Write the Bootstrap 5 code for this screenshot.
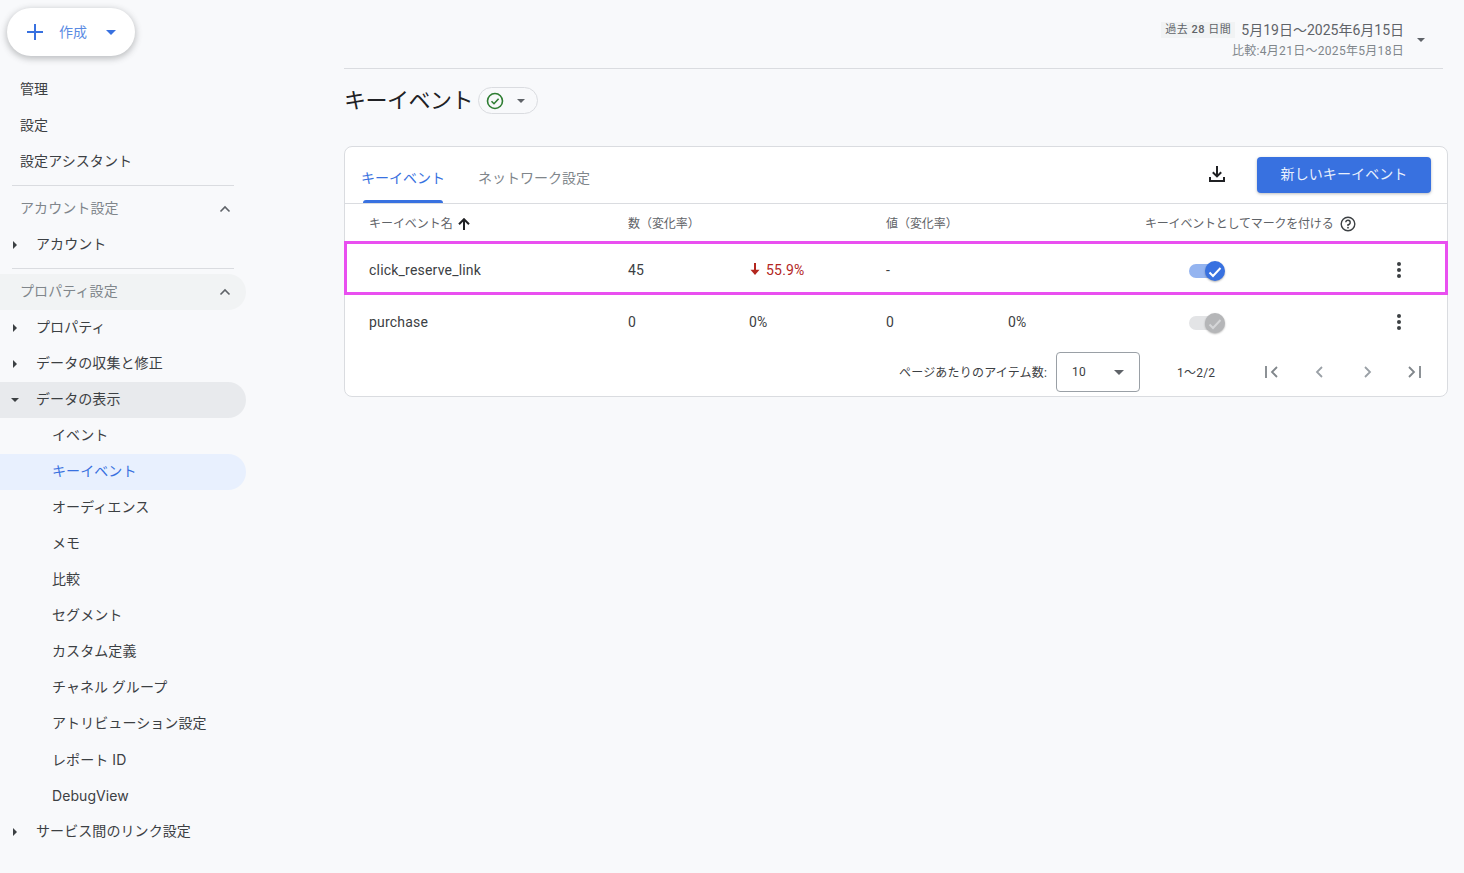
<!DOCTYPE html>
<html lang="ja">
<head>
<meta charset="utf-8">
<title>キーイベント</title>
<link href="https://cdn.jsdelivr.net/npm/bootstrap@5.3.0/dist/css/bootstrap.min.css" rel="stylesheet">
<style>
html,body{height:100%;}
body{background:#f8f9fb;font-family:Roboto,"Noto Sans CJK JP",sans-serif;color:#3c4043;font-size:14px;overflow:hidden;}
.shell{height:873px;}
.side{width:246px;flex:none;padding-top:8px;}
.create-btn{width:128px;height:48px;margin-left:7px;background:#fff;border-radius:24px;box-shadow:0 2px 6px 1px rgba(60,64,67,.3);color:#3871e0;font-size:14px;padding:0 0 0 20px;border:0;}
.create-btn span{margin:0 19px 0 16px;color:#5b8be3;}
.nav-stack{margin-top:16px;}
.side-row{height:36px;display:flex;align-items:center;color:#3c4043;font-size:14px;padding-left:20px;padding-bottom:2px;border-radius:0 18px 18px 0;letter-spacing:.08px;}
.side-row.sect{color:#80868b;justify-content:space-between;padding-right:15px;margin-top:5px;}
.side-row.sect svg{margin-top:2px;}
.side-row.tree{padding-left:36px;position:relative;}
.side-row.sub{padding-left:52px;}
.side-row.grey{background:#f1f3f4;}
.side-row.open{background:#e8eaed;}
.side-row.act{background:#e8f0fe;color:#3871e0;}
.inter-txt{font-family:Inter,"Noto Sans CJK JP",sans-serif;}
.caret-r{position:absolute;left:13px;top:14px;border-left:4px solid #3c4043;border-top:4px solid transparent;border-bottom:4px solid transparent;}
.caret-d{position:absolute;left:11px;top:16px;border-top:4px solid #3c4043;border-left:4px solid transparent;border-right:4px solid transparent;}
.rule{height:1px;background:#dadce0;margin:5px 12px 0 12px;}
.main-area{padding:0 16px 0 98px;}
.topbar{height:69px;margin-right:5px;border-bottom:1px solid #dadce0;padding:20px 0 0;}
.range-chip{background:#f1f3f4;color:#5f6368;font-size:11px;padding:0 4px;line-height:16px;letter-spacing:.5px;}
.range-main{font-size:14px;color:#5f6368;line-height:20px;margin-left:6px;}
.range-sub{font-size:12px;color:#80868b;line-height:20px;text-align:right;margin-top:1px;letter-spacing:.3px;}
.range-caret{border-top:4px solid #5f6368;border-left:4px solid transparent;border-right:4px solid transparent;margin:18px 18px 0 13px;}
.page-title{font-size:22px;font-weight:400;color:#202124;line-height:34px;margin:0;letter-spacing:-.5px;}
.title-row{margin-top:15px;height:32px;}
.status-pill{width:60px;height:27px;border:1px solid #dadce0;border-radius:14px;margin-left:5px;margin-top:3px;padding-left:7px;}
.pill-caret{border-top:4px solid #5f6368;border-left:4px solid transparent;border-right:4px solid transparent;margin-left:13px;}
.panel{margin-top:30px;width:1104px;height:251px;background:#fff;border:1px solid #dadce0;border-radius:8px;}
.tab-head{height:57px;border-bottom:1px solid #dadce0;padding:0 16px 0 16px;}
.tab-item{height:56px;padding-top:21px;font-size:14px;line-height:20px;color:#80868b;margin-right:33px;position:relative;}
.tab-item.on{color:#3871e0;}
.tab-item.on::after{content:"";position:absolute;left:2px;right:2px;bottom:0;height:3px;background:#3871e0;border-radius:3px 3px 0 0;}
.new-btn{width:174px;height:36px;background:#3871e0;color:#e9f0fd;border:0;border-radius:4px;font-size:14px;box-shadow:0 1px 3px rgba(60,64,67,.35);margin-top:-1px;letter-spacing:.1px;}
.dl-btn{margin-right:31px;margin-top:-3px;}
.ev-table{table-layout:fixed;width:1104px;max-width:none;border-collapse:collapse;margin:0 0 0 -1px;}
.ev-table th,.ev-table td{padding:0;font-weight:400;color:#3c4043;background:transparent;border:0;vertical-align:middle;box-shadow:none;letter-spacing:.2px;}
.ev-table th{height:37px;font-size:12px;color:#5f6368;padding-top:2px;letter-spacing:-.05px;}
.ev-table th.mark-head{letter-spacing:-.2px;}
.sort-ic{margin-left:2px;vertical-align:-2px;}
.help-ic{margin-left:4px;vertical-align:-4px;}
.ev-table td{height:52px;font-size:14px;padding-top:2px;}
.ev-table .first{padding-left:25px;}
.hl-row{outline:3px solid #e94ff0;outline-offset:-3px;}
.ev-table .hl-row td{height:54px;padding-top:4px;}
.ev-table td.down{color:#b3261e;}
.arrow-svg{vertical-align:-1px;margin-right:5px;}
.tog{position:relative;display:block;width:36px;height:24px;margin-left:44px;}
.tog-track{position:absolute;left:0;top:6px;width:32px;height:14px;border-radius:7px;background:#94b4f0;}
.tog-thumb{position:absolute;right:0;top:3px;width:20px;height:20px;border-radius:50%;background:#3871e0;box-shadow:0 1px 2px rgba(0,0,0,.3);}
.tog.off .tog-track{background:#e3e4e6;}
.tog.off .tog-thumb{background:#b5b6b8;}
.kebab{display:flex;flex-direction:column;gap:2px;align-items:center;width:4px;margin-left:17px;}
.kebab i{display:block;width:4px;height:4px;border-radius:50%;background:#3c4043;}
.pager{height:48px;font-size:12px;color:#3c4043;padding-left:554px;margin-top:1px;letter-spacing:.2px;}
.pager>span{padding-top:2px;}
.size-box{width:84px;height:40px;border:1px solid #9aa0a6;border-radius:4px;margin-left:9px;padding:0 15px;}
.box-caret{border-top:5px solid #5f6368;border-left:5px solid transparent;border-right:5px solid transparent;}
.pg-count{margin:0 44px 0 37px;}
.pg-icons{gap:24px;}
</style>
</head>
<body>
<div class="d-flex shell">
  <aside class="side">
    <button class="create-btn d-flex align-items-center" type="button">
      <svg width="16" height="16" viewBox="0 0 16 16"><path d="M8 0v16M0 8h16" stroke="#3871e0" stroke-width="2" fill="none"/></svg>
      <span>作成</span>
      <svg width="10" height="5" viewBox="0 0 10 5"><path d="M0 0h10L5 5z" fill="#3871e0"/></svg>
    </button>
    <nav class="nav-stack">
      <div class="side-row">管理</div>
      <div class="side-row">設定</div>
      <div class="side-row">設定アシスタント</div>
      <div class="rule"></div>
      <div class="side-row sect">アカウント設定
        <svg width="12" height="8" viewBox="0 0 12 8"><path d="M1.5 6.5 6 2l4.500 4.500" stroke="#5f6368" stroke-width="1.600" fill="none"/></svg></div>
      <div class="side-row tree"><b class="caret-r"></b>アカウント</div>
      <div class="rule"></div>
      <div class="side-row sect grey">プロパティ設定
        <svg width="12" height="8" viewBox="0 0 12 8"><path d="M1.5 6.5 6 2l4.500 4.500" stroke="#5f6368" stroke-width="1.600" fill="none"/></svg></div>
      <div class="side-row tree"><b class="caret-r"></b>プロパティ</div>
      <div class="side-row tree"><b class="caret-r"></b>データの収集と修正</div>
      <div class="side-row tree open"><b class="caret-d"></b>データの表示</div>
      <div class="side-row sub">イベント</div>
      <div class="side-row sub act">キーイベント</div>
      <div class="side-row sub">オーディエンス</div>
      <div class="side-row sub">メモ</div>
      <div class="side-row sub">比較</div>
      <div class="side-row sub">セグメント</div>
      <div class="side-row sub">カスタム定義</div>
      <div class="side-row sub">チャネル グループ</div>
      <div class="side-row sub">アトリビューション設定</div>
      <div class="side-row sub inter-txt">レポート ID</div>
      <div class="side-row sub inter-txt">DebugView</div>
      <div class="side-row tree"><b class="caret-r"></b>サービス間のリンク設定</div>
    </nav>
  </aside>
  <main class="main-area flex-grow-1">
    <div class="topbar d-flex justify-content-end">
      <div>
        <div class="d-flex align-items-center"><span class="range-chip">過去 <b class="fw-medium">28</b> 日間</span><span class="range-main">5月19日〜2025年6月15日</span></div>
        <div class="range-sub">比較:4月21日〜2025年5月18日</div>
      </div>
      <div class="range-caret"></div>
    </div>
    <div class="title-row d-flex">
      <h1 class="page-title">キーイベント</h1>
      <div class="status-pill d-flex align-items-center">
        <svg width="18" height="18" viewBox="0 0 18 18"><circle cx="9" cy="9" r="7.500" fill="none" stroke="#2e7d32" stroke-width="1.600"/><path d="M5.500 9.200 8 11.700l4.600-4.900" fill="none" stroke="#2e7d32" stroke-width="1.600"/></svg>
        <div class="pill-caret"></div>
      </div>
    </div>
    <section class="panel">
      <div class="tab-head d-flex justify-content-between">
        <div class="d-flex">
          <div class="tab-item on">キーイベント</div>
          <div class="tab-item">ネットワーク設定</div>
        </div>
        <div class="d-flex align-items-center">
          <svg class="dl-btn" width="18" height="18" viewBox="0 0 18 18"><path d="M9 1v10M4.800 7.200 9 11.400l4.200-4.200M2 12v4h14v-4" fill="none" stroke="#202124" stroke-width="2"/></svg>
          <button class="new-btn" type="button">新しいキーイベント</button>
        </div>
      </div>
      <table class="table ev-table">
        <colgroup><col style="width:284px"><col style="width:121px"><col style="width:137px"><col style="width:122px"><col style="width:137px"><col style="width:235px"><col></colgroup>
        <thead>
          <tr>
            <th class="first">キーイベント名 <svg class="sort-ic" width="12" height="12" viewBox="0 0 12 12"><path d="M6 12V1.500M1 6.200 6 1.200l5 5" fill="none" stroke="#202124" stroke-width="2"/></svg></th>
            <th>数（変化率）</th><th></th><th>値（変化率）</th><th></th>
            <th class="mark-head" colspan="2">キーイベントとしてマークを付ける <svg class="help-ic" width="16" height="16" viewBox="0 0 16 16"><circle cx="8" cy="8" r="6.800" fill="none" stroke="#3c4043" stroke-width="1.400"/><path d="M5.800 6.300A2.200 2.200 0 1 1 8 8.700v1.200" fill="none" stroke="#3c4043" stroke-width="1.400"/><circle cx="8" cy="11.700" r=".9" fill="#3c4043"/></svg></th>
          </tr>
        </thead>
        <tbody>
          <tr class="hl-row">
            <td class="first">click_reserve_link</td><td>45</td>
            <td class="down"><svg class="arrow-svg" width="12" height="13" viewBox="0 0 12 13"><path d="M6 0v9" stroke="#b3261e" stroke-width="2" fill="none"/><path d="M1.500 6.800h9L6 12z" fill="#b3261e"/></svg>55.9%</td>
            <td>-</td><td></td>
            <td><span class="tog"><span class="tog-track"></span><span class="tog-thumb"><svg width="20" height="20" viewBox="0 0 20 20"><path d="M4.500 10.500 8 14l7.500-8" fill="none" stroke="#fff" stroke-width="2"/></svg></span></span></td>
            <td><div class="kebab"><i></i><i></i><i></i></div></td>
          </tr>
          <tr>
            <td class="first">purchase</td><td>0</td><td>0%</td><td>0</td><td>0%</td>
            <td><span class="tog off"><span class="tog-track"></span><span class="tog-thumb"><svg width="20" height="20" viewBox="0 0 20 20"><path d="M4.500 10.500 8 14l7.500-8" fill="none" stroke="#d5d6d8" stroke-width="2"/></svg></span></span></td>
            <td><div class="kebab"><i></i><i></i><i></i></div></td>
          </tr>
        </tbody>
      </table>
      <div class="pager d-flex align-items-center">
        <span>ページあたりのアイテム数:</span>
        <div class="size-box d-flex align-items-center justify-content-between"><span>10</span><div class="box-caret"></div></div>
        <span class="pg-count">1〜2/2</span>
        <div class="d-flex pg-icons">
          <svg width="24" height="14" viewBox="0 0 24 14"><path d="M7 1v12M18 2l-5 5 5 5" fill="none" stroke="#80868b" stroke-width="1.800"/></svg>
          <svg width="24" height="14" viewBox="0 0 24 14"><path d="M15 2l-5 5 5 5" fill="none" stroke="#9aa0a6" stroke-width="1.800"/></svg>
          <svg width="24" height="14" viewBox="0 0 24 14"><path d="M10 2l5 5-5 5" fill="none" stroke="#9aa0a6" stroke-width="1.800"/></svg>
          <svg width="24" height="14" viewBox="0 0 24 14"><path d="M6 2l5 5-5 5M17 1v12" fill="none" stroke="#80868b" stroke-width="1.800"/></svg>
        </div>
      </div>
    </section>
  </main>
</div>
<script src="https://cdn.jsdelivr.net/npm/bootstrap@5.3.0/dist/js/bootstrap.bundle.min.js"></script>
</body>
</html>
